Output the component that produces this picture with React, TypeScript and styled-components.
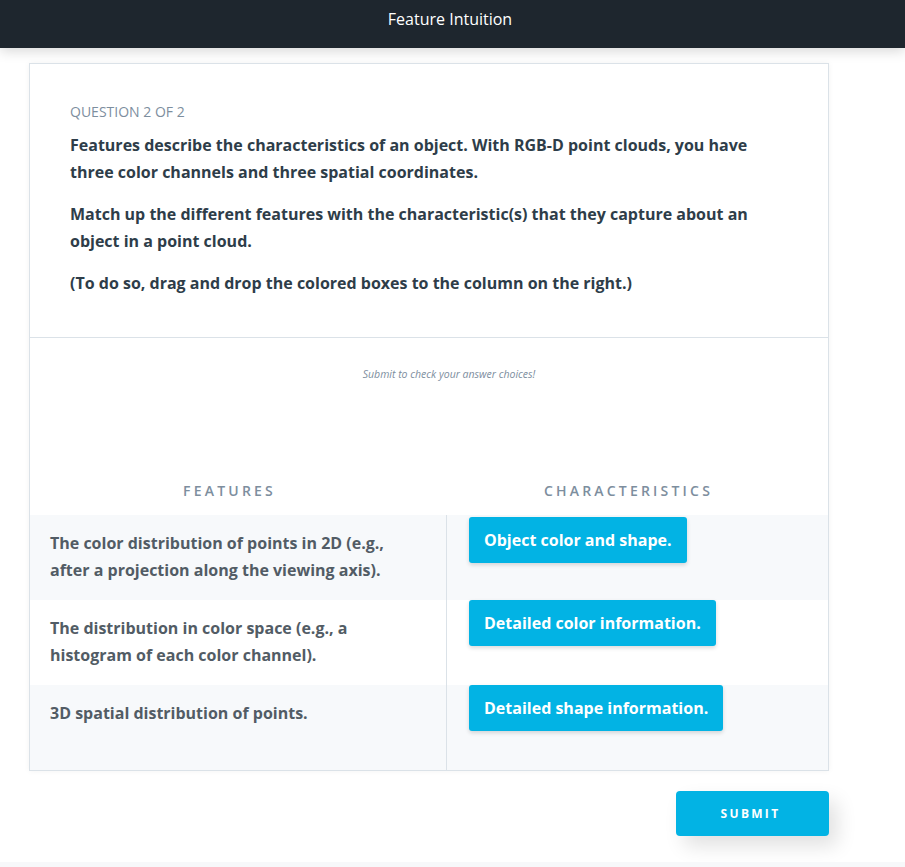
import React from "react";
import styled, { createGlobalStyle } from "styled-components";

const Global = createGlobalStyle`
  html, body { margin: 0; padding: 0; background: #ffffff; }
  body { font-family: "Open Sans", "Noto Sans", sans-serif; -webkit-font-smoothing: antialiased; }
  * { box-sizing: border-box; }
`;

const Page = styled.div`
  min-height: 867px;
  display: flex;
  flex-direction: column;
`;

const Header = styled.header`
  height: 48px;
  background: #1e262e;
  color: #ffffff;
  display: flex;
  align-items: flex-start;
  justify-content: center;
  padding: 7px 5px 0 0;
  font-size: 16px;
  line-height: 24px;
  box-shadow: 0 3px 12px rgba(0, 0, 0, 0.16);
  position: relative;
  z-index: 1;
`;

const Main = styled.main`
  padding: 15px 0 26px 29px;
  display: flex;
  flex-direction: column;
  align-items: flex-start;
`;

const Card = styled.section`
  width: 800px;
  border: 1px solid #dbe2e8;
  background: #ffffff;
  box-shadow: 0 0 6px rgba(0, 0, 0, 0.05);
`;

const Prompt = styled.div`
  padding: 38px 40px 40px 40px;
  border-bottom: 1px solid #dbe2e8;
`;

const Label = styled.div`
  font-size: 14px;
  line-height: 20px;
  color: #7d8e9e;
  text-transform: uppercase;
  margin-bottom: 10px;
`;

const Para = styled.p`
  margin: 0 0 15px 0;
  font-size: 16px;
  line-height: 27px;
  font-weight: 700;
  color: #2e3d49;
  &:last-child { margin-bottom: 0; }
`;

const Hint = styled.div`
  padding: 29px 0 0 40px;
  text-align: center;
  font-size: 10.5px;
  line-height: 15px;
  font-style: italic;
  color: #7d8e9e;
  height: 141px;
`;

const Table = styled.div`
  display: grid;
  grid-template-columns: 417px 1fr;
`;

const ColHead = styled.div`
  text-align: center;
  font-size: 14px;
  line-height: 24px;
  font-weight: 600;
  letter-spacing: 3.2px;
  color: #7d8e9e;
  padding-right: 18px;
  margin-bottom: 12px;
`;

const FeatureCell = styled.div<{ $shaded: boolean }>`
  height: 85px;
  background: ${(p) => (p.$shaded ? "#f7f9fb" : "#ffffff")};
  padding: 15px 40px 0 20px;
  font-size: 16px;
  line-height: 27px;
  font-weight: 700;
  color: #525c65;
  border-right: 1px solid #dbe2e8;
`;

const AnswerCell = styled.div<{ $shaded: boolean; $top: number }>`
  height: 85px;
  background: ${(p) => (p.$shaded ? "#f7f9fb" : "#ffffff")};
  padding: ${(p) => p.$top}px 20px 0 22px;
  display: flex;
  align-items: flex-start;
`;

const Chip = styled.div`
  height: 46px;
  display: flex;
  align-items: center;
  padding: 0 15px;
  background: #02b3e4;
  color: #ffffff;
  border-radius: 3px;
  font-size: 16px;
  font-weight: 700;
  box-shadow: 0 2px 4px rgba(0, 0, 0, 0.15);
  white-space: nowrap;
`;

const Actions = styled.div`
  width: 800px;
  display: flex;
  justify-content: flex-end;
  margin-top: 20px;
`;

const SubmitButton = styled.button`
  width: 153px;
  height: 45px;
  border: none;
  border-radius: 4px;
  background: #02b3e4;
  color: #ffffff;
  font-family: "Open Sans", "Noto Sans", sans-serif;
  font-size: 12px;
  font-weight: 700;
  letter-spacing: 2.3px;
  padding-left: 2px;
  box-shadow: 8px 10px 20px rgba(0, 0, 0, 0.12);
`;

const Footer = styled.footer`
  flex: 1;
  background: #f7f8fa;
`;

const rows = [
  {
    feature: "The color distribution of points in 2D (e.g., after a projection along the viewing axis).",
    answer: "Object color and shape.",
    top: 2,
  },
  {
    feature: "The distribution in color space (e.g., a histogram of each color channel).",
    answer: "Detailed color information.",
    top: 0,
  },
  {
    feature: "3D spatial distribution of points.",
    answer: "Detailed shape information.",
    top: 0,
  },
];

export default function App() {
  return (
    <Page>
      <Global />
      <Header>Feature Intuition</Header>
      <Main>
        <Card>
          <Prompt>
            <Label>Question 2 of 2</Label>
            <Para>
              Features describe the characteristics of an object. With RGB-D point clouds, you have three color
              channels and three spatial coordinates.
            </Para>
            <Para>Match up the different features with the characteristic(s) that they capture about an object in a point cloud.</Para>
            <Para>(To do so, drag and drop the colored boxes to the column on the right.)</Para>
          </Prompt>
          <Hint>Submit to check your answer choices!</Hint>
          <Table>
            <ColHead>FEATURES</ColHead>
            <ColHead>CHARACTERISTICS</ColHead>
            {rows.map((r, i) => (
              <React.Fragment key={i}>
                <FeatureCell $shaded={i !== 1}>{r.feature}</FeatureCell>
                <AnswerCell $shaded={i !== 1} $top={r.top}>
                  <Chip>{r.answer}</Chip>
                </AnswerCell>
              </React.Fragment>
            ))}
          </Table>
        </Card>
        <Actions>
          <SubmitButton>SUBMIT</SubmitButton>
        </Actions>
      </Main>
      <Footer />
    </Page>
  );
}
